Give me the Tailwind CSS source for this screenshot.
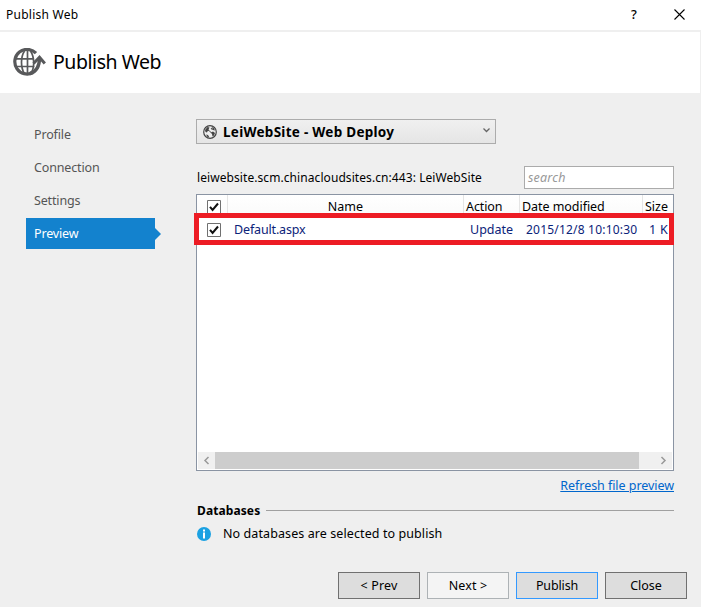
<!DOCTYPE html>
<html lang="en">
<head>
<meta charset="utf-8">
<title>Publish Web</title>
<script src="https://cdn.jsdelivr.net/npm/@tailwindcss/browser@4"></script>
</head>
<body class="w-[701px] h-[607px] overflow-hidden bg-[#efefef] text-black text-[13px] leading-[18px] font-['Noto_Sans','Open_Sans',sans-serif] whitespace-nowrap">
<div class="flex flex-col h-[607px]">
  <div class="h-[30px] bg-white flex items-center pl-[6px] pr-[16px]">
    <span class="text-[12px] tracking-[0.25px] grow">Publish Web</span>
    <span class="text-[13px] font-medium w-[8px] mr-[35px] relative -top-px">?</span>
    <svg class="w-[11px] h-[11px] shrink-0 relative -top-px" viewBox="0 0 11 11" fill="none" stroke="#000" stroke-width="1.1"><path d="M.5 .5l10 10M10.500 .5l-10 10"/></svg>
  </div>
  <header class="mt-[2px] mr-px h-[61px] bg-white flex items-center pl-[13px]">
    <svg class="w-[33px] h-[30px] shrink-0" viewBox="0 0 33 30" fill="none" stroke="#58595b">
      <path d="M23 5.200A12.300 12.300 0 1 0 20 24.500" stroke-width="3.200"/>
      <path d="M3 10.800h17M3 18.500h18.500M14.500 3v23M11.500 3C7.500 9 7.500 19.500 11.500 26M17.500 3c4 6 4.500 17 0 23" stroke-width="1.700"/>
      <path d="M17 25.500C24 23.500 26.500 18 26.500 10" stroke-width="3.400"/>
      <path d="M20.500 15.500L26.500 9.300L31.800 15.500" stroke-width="3"/>
    </svg>
    <h1 class="text-[19.5px] leading-[28px] tracking-[-0.45px] ml-[7px] relative -top-px">Publish Web</h1>
  </header>
  <div class="flex grow">
    <nav class="w-[196px] shrink-0 pl-[26px] pt-[26px] flex flex-col gap-[2px] text-[12.5px] tracking-[-0.15px] text-[#555]">
      <a class="h-[31px] w-[129px] pl-[8px] flex items-center">Profile</a>
      <a class="h-[31px] w-[129px] pl-[8px] flex items-center">Connection</a>
      <a class="h-[31px] w-[129px] pl-[8px] flex items-center">Settings</a>
      <div class="flex items-center"><a class="h-[31px] w-[129px] pl-[8px] flex items-center bg-[#1382ce] text-white">Preview</a><svg class="w-[6px] h-[12px]" viewBox="0 0 6 12"><path d="M0 0l6 6l-6 6z" fill="#1382ce"/></svg></div>
    </nav>
    <main class="w-[478px] pt-[26px] flex flex-col">
      <div class="w-[300px] h-[25px] shrink-0 border border-[#acacac] bg-linear-to-b from-[#f0f0f0] to-[#e5e5e5] flex items-center pl-[6px] pr-[5px]">
        <svg class="w-[14px] h-[14px] shrink-0" viewBox="0 0 14 14"><circle cx="7" cy="7" r="6.300" fill="#eee" stroke="#444" stroke-width="1.200"/><path d="M2 5L4.500 2L6.500 2.500L5.500 4.500L6.500 5.500L4.500 6.200L4 7.500L2.500 7zM8 7.500l2-1l2 1.500l-1 2.500l-1.500 1l-.5-2.500zM8.500 1.800l2.500 1.500l1 2.200l-2-.5zM3 9.500l2 .5l1.500 2.500l-2-.5z" fill="#444"/><path d="M6 5.500l3 3M8 3l1.500 2" stroke="#444" stroke-width="1"/></svg>
        <b class="text-[13.5px] tracking-[0.27px] ml-[6px] grow">LeiWebSite - Web Deploy</b>
        <svg class="w-[7px] h-[5px] relative -top-px" viewBox="0 0 7 5" fill="none" stroke="#666" stroke-width="1.300"><path d="M.5 .5l3 3l3-3"/></svg>
      </div>
      <div class="mt-[22px] h-[23px] flex items-center justify-between pl-px">
        <span class="text-[12px] tracking-[0.075px]">leiwebsite.scm.chinacloudsites.cn:443: LeiWebSite</span>
        <div class="w-[150px] h-[23px] bg-white border border-[#ababab] flex items-center pl-[3px] text-[12.5px] tracking-[0.2px] italic text-[#999]">search</div>
      </div>
      <section class="relative mt-[5px] h-[277px] shrink-0 border border-[#8a94a3] bg-white flex flex-col">
        <div class="h-[23px] flex items-center text-[12.5px] bg-linear-to-b from-white to-[#fafafa]">
          <div class="w-[31px] h-full flex items-center pl-[10px] border-r border-[#e5e5e5]"><svg class="w-[14px] h-[14px]" viewBox="0 0 14 14"><path d="M.5 .5h13v13H.5z" fill="#fff" stroke="#707070"/><path d="M3 6.800l2.600 3.200L11 3.500" fill="none" stroke="#111" stroke-width="2"/></svg></div>
          <div class="w-[236px] h-full flex items-center justify-center border-r border-[#e5e5e5]">Name</div>
          <div class="w-[56px] h-full flex items-center pl-[2px] tracking-[-0.1px] border-r border-[#e5e5e5]">Action</div>
          <div class="w-[123px] h-full flex items-center pl-[2px] tracking-[-0.05px] border-r border-[#e5e5e5]">Date modified</div>
          <div class="h-full flex items-center pl-[2px]">Size</div>
        </div>
        <div class="h-[23px] flex items-center text-[12.5px] text-[#0b2379] overflow-hidden">
          <div class="w-[37px] pl-[10px] shrink-0"><svg class="w-[14px] h-[14px]" viewBox="0 0 14 14"><path d="M.5 .5h13v13H.5z" fill="#fff" stroke="#707070"/><path d="M3 6.800l2.600 3.200L11 3.500" fill="none" stroke="#111" stroke-width="2"/></svg></div>
          <div class="w-[236px] shrink-0 tracking-[-0.15px]">Default.aspx</div>
          <div class="w-[56px] shrink-0">Update</div>
          <div class="w-[123px] shrink-0 text-[12px] tracking-[0.2px]">2015/12/8 10:10:30</div>
          <div class="shrink-0 tracking-[0.3px]">1 K</div>
        </div>
        <div class="grow"></div>
        <div class="mx-px mb-px h-[17px] bg-[#f0f0f0] flex items-center">
          <svg class="w-[17px] h-[17px]" viewBox="0 0 17 17" fill="none" stroke="#999" stroke-width="1.500"><path d="M10.500 5l-3.500 3.500l3.500 3.500"/></svg>
          <div class="w-[424px] h-full bg-[#cdcdcd]"></div>
          <svg class="w-[33px] h-[17px]" viewBox="0 0 33 17" fill="none" stroke="#999" stroke-width="1.500"><path d="M22.500 5l3.500 3.500l-3.500 3.500"/></svg>
        </div>
        <div class="absolute left-[-3px] top-[18px] w-[480px] h-[32px] border-[5px] border-[#ed1c24]"></div>
      </section>
      <div class="h-[18px] mt-[6px] flex justify-end text-[12.5px] tracking-[-0.05px] text-[#0066cc]"><a class="underline">Refresh file preview</a></div>
      <div class="h-[18px] mt-[6px] flex items-center pl-px"><b class="w-[69px] text-[12px] tracking-[0.1px] relative top-px">Databases</b><div class="h-px grow bg-[#a0a0a0]"></div></div>
      <div class="h-[18px] mt-[6px] flex items-center pl-px">
        <svg class="w-[14px] h-[14px]" viewBox="0 0 14 14"><circle cx="7" cy="7" r="7" fill="#1ba1e2"/><path d="M6 2.500h2v2H6zM6 5.500h2v6H6z" fill="#fff"/></svg>
        <span class="ml-[12px] text-[12.5px] tracking-[0.09px]">No databases are selected to publish</span>
      </div>
    </main>
  </div>
  <footer class="h-[35px] shrink-0 flex gap-[7px] justify-end pr-[14px] text-[12.5px]">
    <button class="w-[82px] h-[27px] border border-[#707070] bg-[#ddd] tracking-[0.15px]">&lt; Prev</button>
    <button class="w-[82px] h-[27px] border border-[#adb2b5] bg-[#f4f4f4] tracking-[0.15px]">Next &gt;</button>
    <button class="w-[82px] h-[27px] border border-[#3399ff] bg-[#ddd] tracking-[-0.15px]">Publish</button>
    <button class="w-[82px] h-[27px] border border-[#707070] bg-[#ddd]">Close</button>
  </footer>
</div>
</body>
</html>
